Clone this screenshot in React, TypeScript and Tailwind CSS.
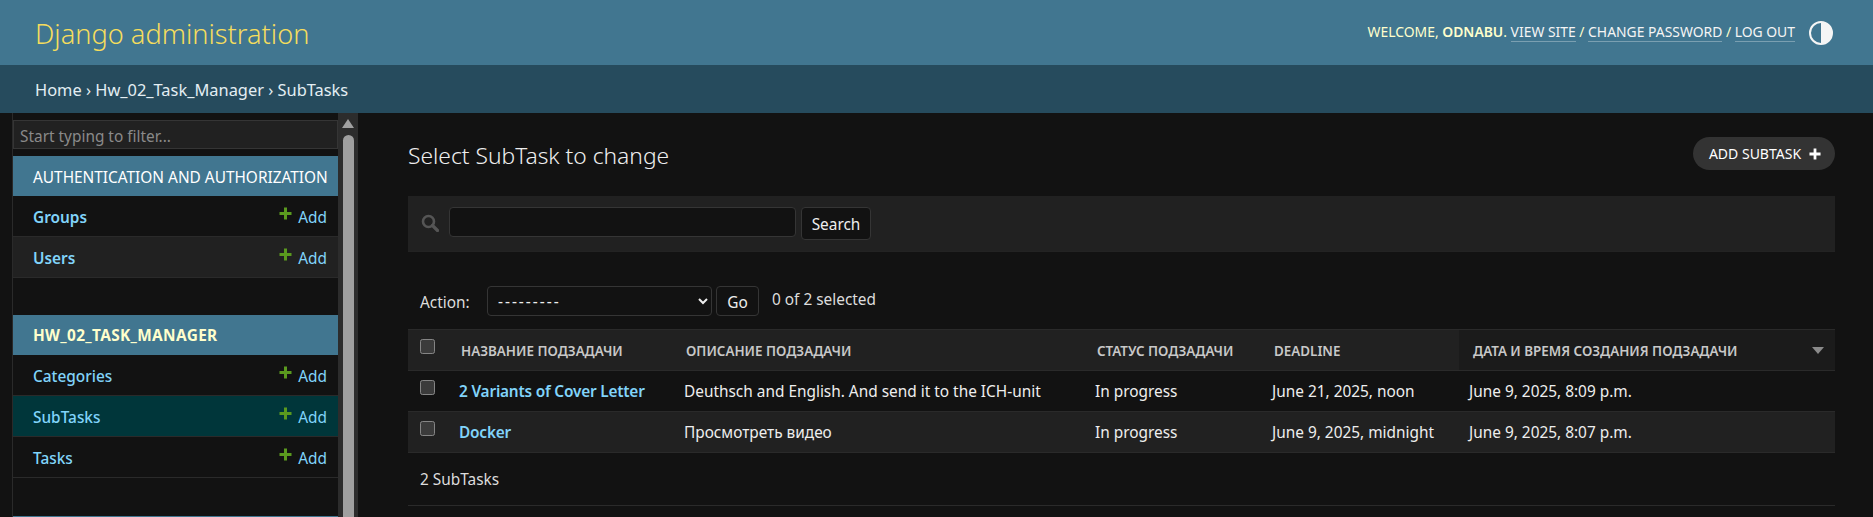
import React from 'react';

const font = "font-['Noto_Sans','Open_Sans',sans-serif]";

const PlusIcon = ({ className }: { className?: string }) => (
  <svg viewBox="0 0 13 13" className={className} fill="currentColor">
    <path d="M5 0.5h3V5h4.500v3H8v4.500H5V8H0.500V5H5z" />
  </svg>
);

const ThemeIcon = () => (
  <svg viewBox="0 0 24 24" className="ml-[14px] h-[24px] w-[24px] text-[#f5f5f5]">
    <circle cx="12" cy="12" r="11" fill="none" stroke="currentColor" strokeWidth="2" />
    <path d="M12 1a11 11 0 0 1 0 22z" fill="currentColor" />
  </svg>
);

const SearchIcon = () => (
  <svg viewBox="0 0 18 18" className="h-[18px] w-[18px] text-[#555555]" fill="none" stroke="currentColor">
    <circle cx="7.500" cy="7.500" r="5.500" strokeWidth="2.600" />
    <path d="M11.500 11.500l5 5" strokeWidth="3.200" strokeLinecap="round" />
  </svg>
);

interface NavModel {
  name: string;
  striped?: boolean;
  current?: boolean;
  strong?: boolean;
}

const NavRow = ({ name, striped, current, strong }: NavModel) => (
  <div
    className={`flex h-[41px] shrink-0 items-center justify-between border-b border-[#2a2a2a] pl-[20px] pr-[11px] pt-[3px] text-[15.4px] text-[#81d4fa] ${
      current ? 'bg-[#00363a]' : striped ? 'bg-[#212121]' : 'bg-[#121212]'
    }`}
  >
    <span className={strong ? 'font-semibold' : 'font-medium'}>{name}</span>
    <span className="flex items-center">
      <PlusIcon className="mb-[7px] mr-[6px] h-[13px] w-[13px] text-[#5a9a1e]" />
      Add
    </span>
  </div>
);

const Sidebar = () => (
  <aside className="ml-[12px] flex h-full w-[346px] shrink-0 border-l border-[#2a2a2a]">
    <div className="flex w-[325px] flex-col overflow-hidden">
      <input
        placeholder="Start typing to filter..."
        className="mt-[7px] h-[29px] w-full shrink-0 border border-[#353535] bg-[#212121] px-[6px] pt-[3px] text-[15.4px] outline-none placeholder:text-[#8a8a8a]"
      />
      <div className="mt-[7px] flex h-[40px] shrink-0 items-center bg-[#417690] pl-[20px] pt-[3px] text-[15.4px] text-white">
        AUTHENTICATION AND AUTHORIZATION
      </div>
      <NavRow name="Groups" strong />
      <NavRow name="Users" striped strong />
      <div className="mt-[37px] flex h-[40px] shrink-0 items-center bg-[#417690] pl-[20px] pt-[2px] text-[15.4px] font-bold tracking-[0.35px] text-[#ffffcc]">
        HW_02_TASK_MANAGER
      </div>
      <NavRow name="Categories" />
      <NavRow name="SubTasks" current />
      <NavRow name="Tasks" />
      <div className="mt-[38px] h-[40px] shrink-0 border-t border-[#417690] bg-[#121212]" />
    </div>
    <div className="flex w-[20px] flex-col items-center bg-[#2c2c2c]">
      <svg viewBox="0 0 12 9" className="mt-[6px] h-[9px] w-[12px] text-[#a0a0a0]" fill="currentColor">
        <path d="M6 0l6 9H0z" />
      </svg>
      <div className="mt-[7px] w-[11px] flex-1 rounded-t-full bg-[#9f9f9f]" />
    </div>
  </aside>
);

interface Row {
  title: string;
  description: string;
  status: string;
  deadline: string;
  created: string;
}

const rows: Row[] = [
  {
    title: '2 Variants of Cover Letter',
    description: 'Deuthsch and English. And send it to the ICH-unit',
    status: 'In progress',
    deadline: 'June 21, 2025, noon',
    created: 'June 9, 2025, 8:09 p.m.',
  },
  {
    title: 'Docker',
    description: 'Просмотреть видео',
    status: 'In progress',
    deadline: 'June 9, 2025, midnight',
    created: 'June 9, 2025, 8:07 p.m.',
  },
];

const headers = [
  { label: 'НАЗВАНИЕ ПОДЗАДАЧИ', width: 'w-[225px]' },
  { label: 'ОПИСАНИЕ ПОДЗАДАЧИ', width: 'w-[411px]' },
  { label: 'СТАТУС ПОДЗАДАЧИ', width: 'w-[177px]' },
  { label: 'DEADLINE', width: 'w-[197px]' },
];

const checkbox = 'block h-[15px] w-[15px] [color-scheme:dark]';

const ResultTable = () => (
  <table className="mt-[12px] w-full table-fixed border-collapse">
    <thead>
      <tr className="h-[41px] border-y border-[#2a2a2a] bg-[#212121] text-left text-[13.4px] font-semibold text-[#c8c8c8]">
        <th className="w-[41px] pl-[12px]">
          <input type="checkbox" className={`${checkbox} mb-[8px]`} />
        </th>
        {headers.map((h) => (
          <th key={h.label} className={`${h.width} pl-[12px] pt-[2px] font-semibold`}>
            {h.label}
          </th>
        ))}
        <th className="bg-[#1b1b1b] pl-[14px] pt-[2px] font-semibold">
          <div className="flex items-center justify-between pr-[11px]">
            ДАТА И ВРЕМЯ СОЗДАНИЯ ПОДЗАДАЧИ
            <svg viewBox="0 0 12 7" className="h-[7px] w-[12px] text-[#8a8a8a]" fill="currentColor">
              <path d="M0 0h12L6 7z" />
            </svg>
          </div>
        </th>
      </tr>
    </thead>
    <tbody>
      {rows.map((row, index) => (
        <tr
          key={row.title}
          className={`h-[41px] border-b border-[#2a2a2a] text-[15.4px] text-[#eeeeee] ${
            index % 2 ? 'bg-[#212121]' : 'bg-[#121212]'
          }`}
        >
          <td className="pl-[12px]">
            <input type="checkbox" className={`${checkbox} mb-[8px]`} />
          </td>
          <td className="pl-[10px] pt-[2px] font-semibold tracking-[-0.2px] text-[#81d4fa]">{row.title}</td>
          <td className="pl-[10px] pt-[2px]">{row.description}</td>
          <td className="pl-[10px] pt-[2px]">{row.status}</td>
          <td className="pl-[10px] pt-[2px]">{row.deadline}</td>
          <td className="pl-[10px] pt-[2px]">{row.created}</td>
        </tr>
      ))}
    </tbody>
  </table>
);

export default function App() {
  return (
    <div className={`flex h-[517px] flex-col overflow-hidden bg-[#121212] text-[#eeeeee] ${font}`}>
      <header className="flex h-[65px] shrink-0 items-center justify-between bg-[#417690] pl-[35px] pr-[40px]">
        <h1 className="pt-[4px] text-[27.2px] font-light text-[#f5dd5d]">Django administration</h1>
        <div className="flex items-center text-[13.9px] text-[#ffffcc]">
          <span className="mb-[1px]">
            WELCOME, <strong className="font-semibold">ODNABU</strong>.{' '}
            <span className="border-b border-white/30 text-[#f5f5f5]">VIEW SITE</span>
            {' / '}
            <span className="border-b border-white/30 text-[#f5f5f5]">CHANGE PASSWORD</span>
            {' / '}
            <span className="border-b border-white/30 text-[#f5f5f5]">LOG OUT</span>
          </span>
          <ThemeIcon />
        </div>
      </header>
      <nav className="flex h-[48px] shrink-0 items-center bg-[#264b5d] pl-[35px] pt-[2px] text-[16.4px] text-[#e3eef3]">
        Home › Hw_02_Task_Manager › SubTasks
      </nav>
      <div className="flex min-h-0 flex-1">
        <Sidebar />
        <main className="flex-1 pl-[50px] pr-[38px]">
          <div className="flex h-[83px] items-start justify-between">
            <h2 className="mt-[26px] text-[22.8px] font-light leading-[34px]">Select SubTask to change</h2>
            <button className="mt-[24px] flex h-[33px] w-[142px] items-center justify-center rounded-full bg-[#333333] pl-[2px] text-[14px] text-white">
              ADD SUBTASK
              <PlusIcon className="ml-[8px] h-[12px] w-[12px]" />
            </button>
          </div>
          <div className="flex h-[56px] items-start border-b border-[#232323] bg-[#212121] pl-[13px] pt-[11px]">
            <span className="mr-[10px] mt-[7px]">
              <SearchIcon />
            </span>
            <input className="h-[30px] w-[347px] rounded-[4px] border border-[#353535] bg-[#121212] outline-none" />
            <button className="ml-[5px] h-[33px] w-[70px] rounded-[4px] border border-[#353535] bg-[#121212] pt-[2px] text-[15.4px]">
              Search
            </button>
          </div>
          <div className="mt-[34px] flex h-[31px] items-start pl-[12px] text-[15.4px]">
            <span className="mt-[5px] w-[67px] text-[#dddddd]">Action:</span>
            <select className="h-[30px] w-[225px] rounded-[4px] border border-[#353535] bg-[#121212] pl-[6px] text-[15.4px] tracking-[2px] [color-scheme:dark]">
              <option>---------</option>
            </select>
            <button className="ml-[4px] h-[30px] w-[43px] rounded-[4px] border border-[#353535] bg-[#121212] pt-[3px]">Go</button>
            <span className="ml-[13px] mt-[2px] text-[#dddddd]">0 of 2 selected</span>
          </div>
          <ResultTable />
          <p className="flex h-[53px] items-center border-b border-[#2a2a2a] pl-[12px] pt-[2px] text-[15.4px] text-[#dddddd]">2 SubTasks</p>
        </main>
      </div>
    </div>
  );
}
